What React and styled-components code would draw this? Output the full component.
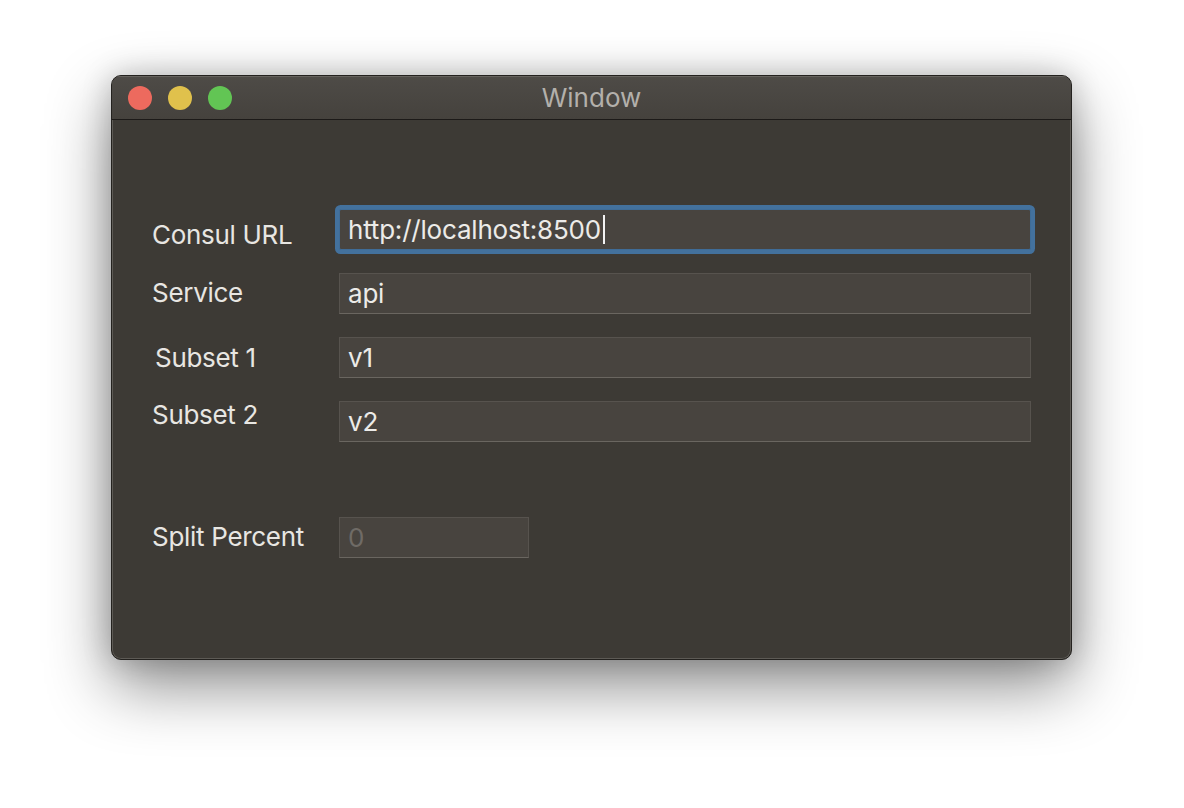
import React from "react";
import styled, { createGlobalStyle } from "styled-components";

const Global = createGlobalStyle`
  html, body { margin: 0; padding: 0; background: #ffffff; }
  body { font-family: Inter, "Liberation Sans", sans-serif; }
`;

const Page = styled.div`
  width: 1184px;
  height: 808px;
  box-sizing: border-box;
  padding: 75px 0 0 111px;
  background: #ffffff;
`;

const Win = styled.div`
  width: 961px;
  height: 585px;
  box-sizing: border-box;
  border-radius: 10px;
  border: 1px solid #24221f;
  background: #3d3a35;
  box-shadow: inset 0 0 0 1px #5d5a55, 0 26px 64px rgba(0, 0, 0, 0.45),
    0 0 30px rgba(0, 0, 0, 0.2);
  display: flex;
  flex-direction: column;
  overflow: hidden;
`;

const TitleBar = styled.div`
  height: 43px;
  flex: none;
  display: flex;
  align-items: center;
  padding: 0 16px;
  position: relative;
  background: linear-gradient(#4e4b47, #45423d);
  border-bottom: 1px solid #1c1a18;
  box-shadow: inset 0 1px 0 #66635e;
`;

const Lights = styled.div`
  display: flex;
  gap: 16px;
`;

const Light = styled.span`
  width: 24px;
  height: 24px;
  border-radius: 50%;
  background: ${(p) => p.color};
`;

const Title = styled.div`
  position: absolute;
  left: 0;
  right: 0;
  top: 0;
  bottom: 0;
  display: flex;
  align-items: center;
  justify-content: center;
  color: #b3b0ab;
  font-size: 26px;
  pointer-events: none;
`;

const Body = styled.div`
  flex: 1;
  padding: 89px 40px 0 40px;
  display: flex;
  flex-direction: column;
`;

const Row = styled.div`
  display: flex;
  align-items: flex-start;
  margin-top: ${(p) => p.gap || 0}px;
`;

const Label = styled.div`
  width: ${(p) => 187 - (p.indent || 0)}px;
  padding-left: ${(p) => p.indent || 0}px;
  height: 41px;
  display: flex;
  align-items: center;
  margin-top: ${(p) => p.shift || 0}px;
  margin-bottom: ${(p) => -(p.shift || 0)}px;
  color: #e8e6e2;
  font-size: 26px;
  letter-spacing: -0.3px;
  white-space: nowrap;
`;

const Field = styled.div`
  width: ${(p) => p.w}px;
  height: 41px;
  box-sizing: border-box;
  display: flex;
  align-items: center;
  padding-left: 8px;
  background: #48443f;
  border: 1px solid #57534e;
  border-bottom-color: #6a6660;
  color: ${(p) => (p.placeholder ? "#6f6b66" : "#ecebe8")};
  font-size: 26px;
  letter-spacing: -0.2px;
  ${(p) =>
    p.focused &&
    `
    border-color: #3f6c97;
    box-shadow: 0 0 0 4px #43719d;
    border-radius: 2px;
  `}
`;

const Caret = styled.span`
  display: inline-block;
  width: 2px;
  height: 29px;
  margin-left: 2px;
  background: #f2f2f2;
`;

export default function App() {
  return (
    <>
      <Global />
      <Page>
        <Win>
          <TitleBar>
            <Lights>
              <Light color="#ed6a5e" />
              <Light color="#e0c14c" />
              <Light color="#62c554" />
            </Lights>
            <Title>Window</Title>
          </TitleBar>
          <Body>
            <Row>
              <Label shift={5}>Consul URL</Label>
              <Field w={692} focused>
                http://localhost:8500
                <Caret />
              </Field>
            </Row>
            <Row gap={23}>
              <Label shift={-1}>Service</Label>
              <Field w={692}>api</Field>
            </Row>
            <Row gap={23}>
              <Label indent={3}>Subset 1</Label>
              <Field w={692}>v1</Field>
            </Row>
            <Row gap={23}>
              <Label shift={-7}>Subset 2</Label>
              <Field w={692}>v2</Field>
            </Row>
            <Row gap={75}>
              <Label shift={-1}>Split Percent</Label>
              <Field w={190} placeholder>
                0
              </Field>
            </Row>
          </Body>
        </Win>
      </Page>
    </>
  );
}
